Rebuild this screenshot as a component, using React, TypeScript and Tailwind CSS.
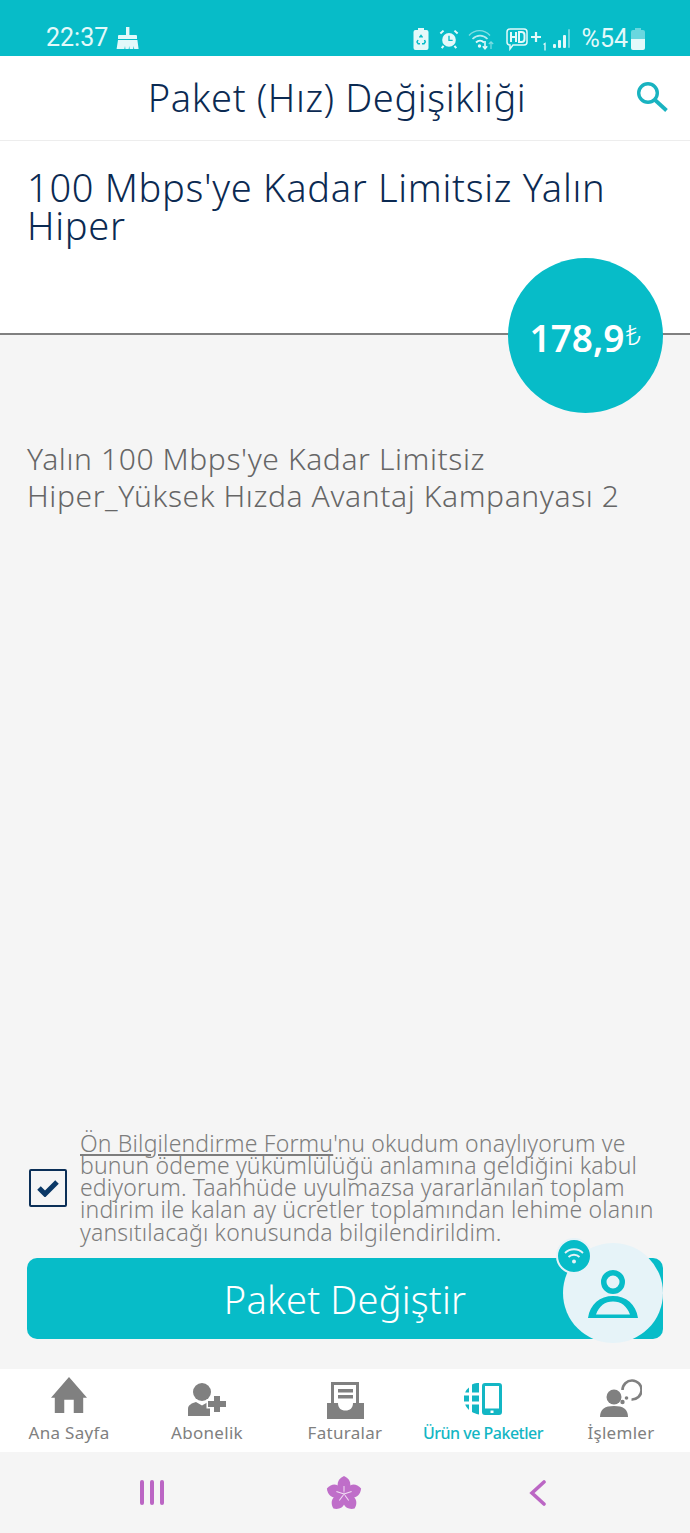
import type { ReactNode } from 'react';

const font = { fontFamily: '"Noto Sans", Lato, sans-serif' };

function Broom() {
  return (
    <svg width="24" height="24" viewBox="0 0 24 24" className="text-[#e3f9fa]">
      <path fill="currentColor" d="M10 1h3.400v8H20a1 1 0 0 1 1 1v3H2v-3a1 1 0 0 1 1-1h7z" />
      <path fill="currentColor" d="M2 14h19.400l1.200 9h-4.400l-.6-3-.4 3h-3.600l-.4-3-.5 3H9.400l-.4-3-.6 3H.6z" />
    </svg>
  );
}

function StatusIcons() {
  return (
    <div className="flex items-center text-[#e3f9fa] mb-[2px]">
      <svg width="16" height="22" viewBox="0 0 16 22">
        <path fill="currentColor" d="M5 0h6v2h2.500a2 2 0 0 1 2 2v16a2 2 0 0 1-2 2h-11a2 2 0 0 1-2-2V4a2 2 0 0 1 2-2H5z" />
        <path fill="none" stroke="#07bcc8" strokeWidth="1.500" d="M6.500 9.500 8 7.500l1.500 2M11.500 12l.8 2-1.300 1.800H9M5 12l-1 2 1.200 1.800H7" />
      </svg>
      <svg width="20" height="22" viewBox="0 0 22 22" className="ml-[10px]">
        <circle cx="11" cy="12" r="7.500" fill="currentColor" />
        <path fill="none" stroke="#07bcc8" strokeWidth="1.500" d="M11 7.500V12.500H15" />
        <path fill="none" stroke="currentColor" strokeWidth="2.200" d="M1.500 5 5 1.800M20.500 5 17 1.800M5 18.500 3 21M17 18.500l2 2.500" />
      </svg>
      <svg width="27" height="22" viewBox="0 0 27 22" className="ml-[9px]" fill="none" stroke="currentColor">
        <path strokeWidth="1.400" opacity=".55" d="M1 7.500C7 1 16 1 22 7.500" />
        <path strokeWidth="1.700" opacity=".8" d="M4.500 11c4.500-4.500 10.500-4.500 15 0" />
        <path strokeWidth="1.800" d="M8 14.500c2.500-2.500 5.500-2.500 8 0" />
        <circle cx="11.500" cy="18" r="1.700" fill="currentColor" stroke="none" />
        <path strokeWidth="1.600" d="M17 13v7.500M14.800 18.300l2.200 2.400 2.200-2.400" />
        <path strokeWidth="1.200" opacity=".55" d="M23 21v-7M20.800 16l2.200-2.200 2.200 2.200" />
      </svg>
      <svg width="22" height="24" viewBox="0 0 22 24" className="ml-[11px]" fill="none" stroke="currentColor">
        <path strokeWidth="1.500" d="M4 2h14a3 3 0 0 1 3 3v10a3 3 0 0 1-3 3H7l-3 4v-4a3 3 0 0 1-3-3V5a3 3 0 0 1 3-3z" />
        <path strokeWidth="2" d="M5 5v10M10 5v10M5 10h5M13 5v10h2.500a3 3 0 0 0 3-3V8a3 3 0 0 0-3-3z" />
      </svg>
      <svg width="18" height="24" viewBox="0 0 18 24" className="ml-[2px]" fill="none" stroke="currentColor">
        <path strokeWidth="2.200" d="M1 10h10M6 5v10" />
        <path strokeWidth="1.300" d="M13.500 17.500 15 16.500v7" />
      </svg>
      <svg width="18" height="22" viewBox="0 0 18 22" className="ml-[5px]" fill="currentColor">
        <rect x="0" y="16" width="3" height="4" rx="1" />
        <rect x="5" y="12" width="3" height="8" rx="1" />
        <rect x="10" y="7" width="3" height="13" rx="1" />
        <rect x="15" y="1" width="2" height="19" rx="1" opacity=".45" />
      </svg>
      <span className="ml-[11px] text-[25px] leading-none" style={{ fontFamily: 'Roboto, sans-serif' }}>%54</span>
      <svg width="14" height="22" viewBox="0 0 14 22" className="ml-[3px]">
        <path fill="currentColor" opacity=".45" d="M4 0h6v2h2a2 2 0 0 1 2 2v7H0V4a2 2 0 0 1 2-2h2z" />
        <path fill="currentColor" d="M0 11h14v9a2 2 0 0 1-2 2H2a2 2 0 0 1-2-2z" />
      </svg>
    </div>
  );
}

function NavItem({ label, active, icon }: { label: string; active?: boolean; icon: ReactNode }) {
  return (
    <div className="w-[138px] flex flex-col items-center">
      <div className="h-[48px] flex items-end justify-center">{icon}</div>
      <span
        className={
          active
            ? 'mt-[6px] text-[16px] leading-[20px] font-medium text-[#13b6c4] tracking-[-0.5px] whitespace-nowrap'
            : 'mt-[6px] text-[17px] leading-[20px] text-[#808080] tracking-[0.3px] whitespace-nowrap'
        }
      >
        {label}
      </span>
    </div>
  );
}

const HomeIcon = (
  <svg width="38" height="36" viewBox="0 0 40 38" fill="#808080" className="mb-[4px]">
    <path d="M20 0 39 22h-4v16H25V24H15v14H5V22H1z" />
  </svg>
);

const AddUserIcon = (
  <svg width="38" height="33" viewBox="0 0 38 33" fill="#808080" className="mb-[1px]">
    <circle cx="14" cy="9" r="9" />
    <path d="M0 33V26c0-4 4-6 8-7l6 3.500 6-3.500 2 .5V33z" />
    <path d="M26 13h6v5h6v6h-6v5h-6v-5h-6v-6h6z" stroke="#fff" strokeWidth="3" paintOrder="stroke" />
  </svg>
);

const InvoiceIcon = (
  <svg width="37" height="37" viewBox="0 0 37 37" fill="#808080" className="mb-[-2px]">
    <path d="M4 0h28v21h-3V3H7v18H4z" />
    <path d="M11 7h15v3.500H11zM11 13h15v3.500H11z" />
    <path d="M0 21h11c0 5 3 7.500 7.500 7.500S26 26 26 21h11v16H0z" />
  </svg>
);

const ProductIcon = (
  <svg width="38" height="32" viewBox="0 0 38 32" fill="#13b6c4" className="mb-[2px]">
    <path d="M5 4.500C3 6 2 7.500 1.200 9.500H5zM8 1.500V9.500h7V0H13C11 .3 9.500.7 8 1.500zM0 12.500v6h5v-6zM8 12.500v6h7v-6zM1.200 21.500C2 23.500 3 25 5 27v-5.500zM8 21.500V29c1.800 1 3.500 1.800 7 2.500V21.500z" />
    <path fillRule="evenodd" d="M21 0h14a3 3 0 0 1 3 3v26a3 3 0 0 1-3 3H21a3 3 0 0 1-3-3V3a3 3 0 0 1 3-3zm0 3v22.500h14V3zm5.500 24.500v2.500h3v-2.500z" />
  </svg>
);

const OperationsIcon = (
  <svg width="42" height="39" viewBox="0 0 42 39" fill="#808080">
    <circle cx="14" cy="19" r="7.500" />
    <path d="M0 39c0-8 5-11 14-11s14 3 14 11z" />
    <circle cx="22.500" cy="24" r="2.200" />
    <circle cx="26.500" cy="20" r="1.800" />
    <path fill="none" stroke="#808080" strokeWidth="2.600" d="M22.500 12a9.500 9.500 0 1 1 9 9.500" />
  </svg>
);

function Flower() {
  return (
    <svg width="36" height="36" viewBox="0 0 36 36" className="mt-[-5px] mr-[5px]">
      {[0, 72, 144, 216, 288].map((angle) => (
        <g key={angle} transform={`rotate(${angle} 18 19)`}>
          <path fill="#bf6ec9" d="M18 19C10 14 9 5 18 1c9 4 8 13 0 18z" />
          <path stroke="#f3dff5" strokeWidth="1" d="M18 19v-8" />
        </g>
      ))}
    </svg>
  );
}

export default function App() {
  return (
    <div className="w-[690px] h-[1533px] flex flex-col bg-[#f5f5f5] overflow-hidden" style={font}>
      <div className="h-[56px] shrink-0 bg-[#07bcc8] flex items-end justify-between pb-[3px] pl-[46px] pr-[45px]">
        <div className="flex items-center text-[#e3f9fa]">
          <span className="text-[25px] leading-[30px]" style={{ fontFamily: 'Roboto, sans-serif' }}>22:37</span>
          <span className="ml-[8px]"><Broom /></span>
        </div>
        <StatusIcons />
      </div>

      <div className="h-[85px] shrink-0 bg-white border-b border-[#ededed] relative flex items-center justify-center">
        <h1 className="text-[38px] font-light tracking-[0.6px] leading-none text-[#0b2a52] ml-[-16px] mb-[3px]">Paket (Hız) Değişikliği</h1>
        <svg width="32" height="30" viewBox="0 0 32 30" fill="none" stroke="#19b3c0" className="absolute right-[22px] top-[26px]">
          <circle cx="12" cy="11" r="9.300" strokeWidth="3.400" />
          <path strokeWidth="3.800" d="M18.500 17.500 30.500 28.500" />
        </svg>
      </div>

      <div className="h-[194px] shrink-0 bg-white border-b-2 border-[#808080] pt-[27px] px-[27px] relative">
        <h2 className="text-[38px] font-light tracking-[0.7px] leading-[38px] text-[#0b2a52]">100 Mbps'ye Kadar Limitsiz Yalın<br />Hiper</h2>
        <div className="absolute right-[27px] top-[117px] w-[155px] h-[155px] rounded-full bg-[#07bcc8] flex items-center justify-center text-white">
          <span className="text-[37px] font-semibold leading-none mt-[3px]">178,9</span>
          <span className="text-[28px] font-light leading-none mb-[3px] ml-[1px]">₺</span>
        </div>
      </div>

      <div className="flex-1 flex flex-col px-[27px]">
        <p className="mt-[105px] text-[30px] font-light tracking-[0.6px] leading-[37px] text-[#666666]">
          Yalın 100 Mbps'ye Kadar Limitsiz<br />Hiper_Yüksek Hızda Avantaj Kampanyası 2
        </p>
        <div className="mt-auto flex items-center">
          <div className="w-[38px] h-[38px] shrink-0 ml-[2px] mt-[2px] border-2 border-[#0b2f57] rounded-[2px] flex items-center justify-center">
            <svg width="22" height="18" viewBox="0 0 22 18" fill="none" stroke="#0b3866" strokeWidth="5">
              <path d="M2 9l6 6L20 3" />
            </svg>
          </div>
          <p className="ml-[13px] text-[23px] font-light tracking-[0.17px] leading-[22.3px] text-[#7d7d7d] whitespace-nowrap">
            <span className="underline underline-offset-[2px]">Ön Bilgilendirme Formu</span>'nu okudum onaylıyorum ve<br />
            bunun ödeme yükümlülüğü anlamına geldiğini kabul<br />
            ediyorum. Taahhüde uyulmazsa yararlanılan toplam<br />
            indirim ile kalan ay ücretler toplamından lehime olanın<br />
            yansıtılacağı konusunda bilgilendirildim.
          </p>
        </div>
        <div className="relative mt-[15px] mb-[30px] h-[81px] rounded-[10px] bg-[#07bcc8] flex items-center justify-center text-white">
          <span className="text-[38px] font-light tracking-[0.2px] leading-none">Paket Değiştir</span>
          <div className="absolute right-0 top-[-15px] w-[100px] h-[100px] rounded-full bg-[#e6f3f8] flex items-center justify-center">
            <svg width="52" height="50" viewBox="0 0 52 50" fill="#07bcc8">
              <path fillRule="evenodd" d="M26 2a12 12 0 1 1 0 24 12 12 0 0 1 0-24zm0 5.500a6.500 6.500 0 1 0 0 13 6.500 6.500 0 0 0 0-13z" />
              <path fillRule="evenodd" d="M1 50C3 36 13 28 26 28s23 8 25 22zM9 46.500h34C40 38 34 33.500 26 33.500S12 38 9 46.500z" />
            </svg>
          </div>
          <div className="absolute right-[71px] top-[-20px] w-[36px] h-[36px] rounded-full bg-[#07bcc8] border-2 border-[#e6f3f8] flex items-center justify-center">
            <svg width="22" height="18" viewBox="0 0 22 18" fill="none" stroke="#e6f3f8" strokeWidth="1.800">
              <path d="M2 6c5-5 13-5 18 0M5.500 10c3-3 8-3 11 0" />
              <circle cx="11" cy="14.500" r="2" fill="#e6f3f8" stroke="none" />
            </svg>
          </div>
        </div>
      </div>

      <div className="h-[83px] shrink-0 bg-white flex">
        <NavItem label="Ana Sayfa" icon={HomeIcon} />
        <NavItem label="Abonelik" icon={AddUserIcon} />
        <NavItem label="Faturalar" icon={InvoiceIcon} />
        <NavItem label="Ürün ve Paketler" active icon={ProductIcon} />
        <NavItem label="İşlemler" icon={OperationsIcon} />
      </div>

      <div className="h-[81px] shrink-0 bg-[#f5f5f5] flex items-start justify-between pt-[28px] pl-[140px] pr-[143px]">
        <div className="flex gap-[6px] h-[25px]">
          <div className="w-[4px] bg-[#bb66c4] rounded-full" />
          <div className="w-[4px] bg-[#bb66c4] rounded-full" />
          <div className="w-[4px] bg-[#bb66c4] rounded-full" />
        </div>
        <Flower />
        <svg width="18" height="26" viewBox="0 0 18 26" fill="none" stroke="#bb66c4" strokeWidth="3.600" strokeLinecap="round">
          <path d="M15 2 3 13l12 11" />
        </svg>
      </div>
    </div>
  );
}
